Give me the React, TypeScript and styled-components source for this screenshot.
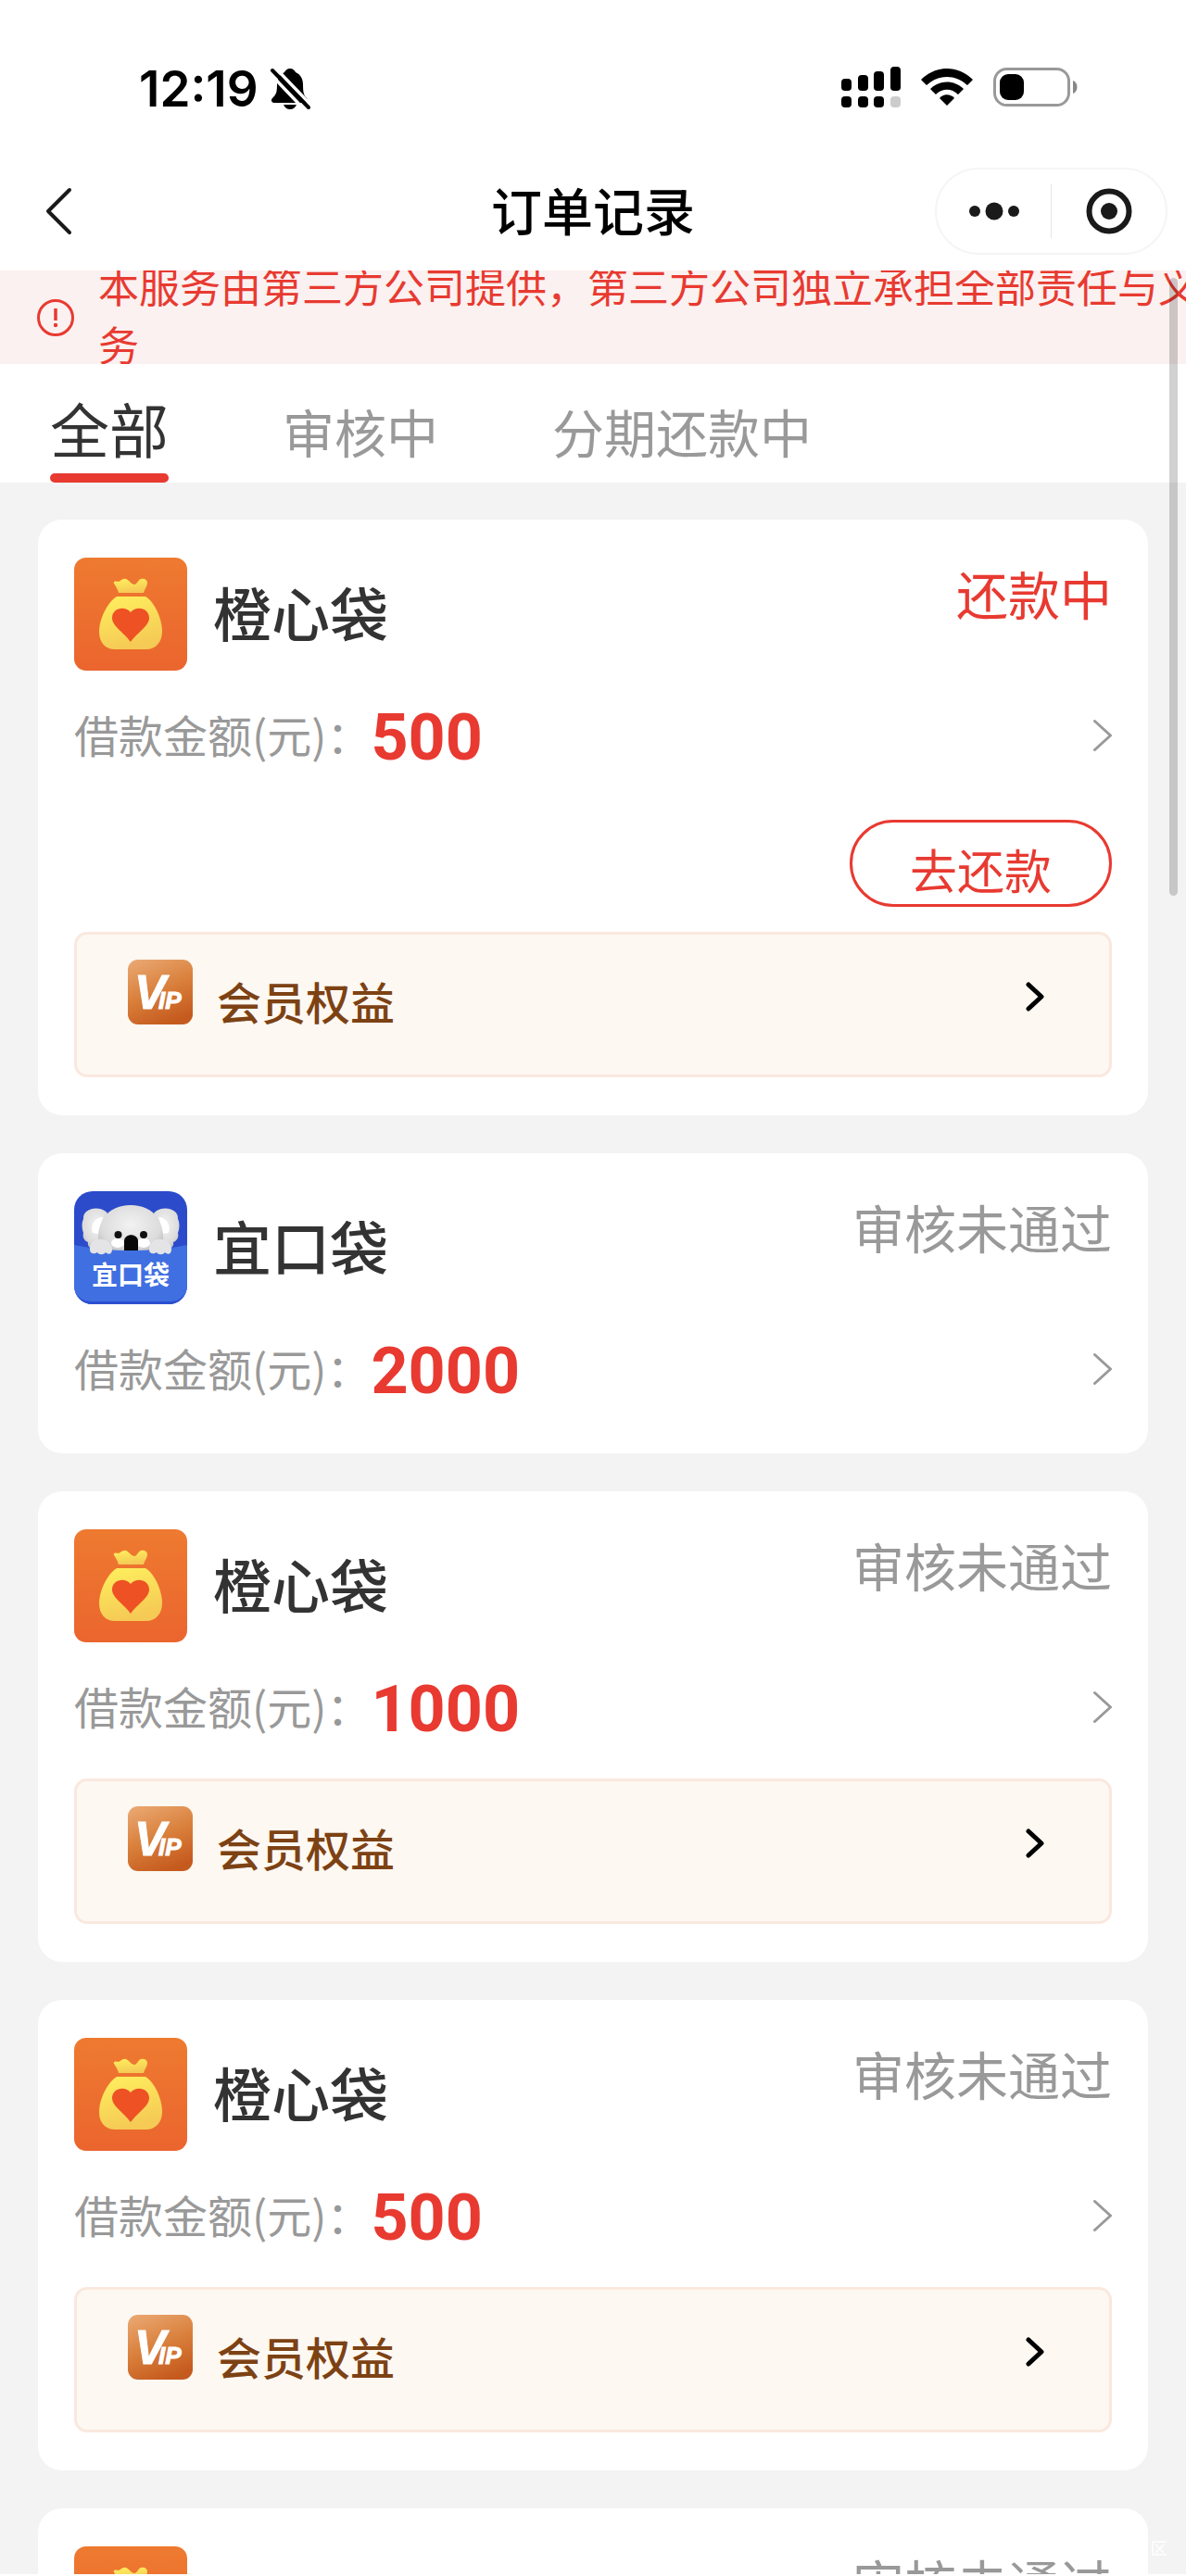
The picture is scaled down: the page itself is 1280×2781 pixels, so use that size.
import React, { useState } from "react";
import styled, { createGlobalStyle } from "styled-components";

const red = "#e83a31";
const grey = "#999999";

const GlobalStyle = createGlobalStyle`
  *, *::before, *::after { box-sizing: border-box; }
  body {
    margin: 0;
    background: #f3f3f3;
    font-family: "Liberation Sans", "Noto Sans CJK SC", sans-serif;
  }
  button { font: inherit; color: inherit; background: none; border: 0; padding: 0; margin: 0; cursor: pointer; }
  a { color: inherit; text-decoration: none; }
  h1, h2, p { margin: 0; font-weight: 500; }
  svg { display: block; flex: none; }
`;

const Screen = styled.div`
  position: relative;
  display: flex;
  flex-direction: column;
  height: 100vh;
  overflow: hidden;
  border-bottom: 2px solid #fff;
  font-family: "Noto Sans CJK SC", sans-serif;
`;

const StatusBar = styled.div`
  display: flex;
  align-items: center;
  justify-content: space-between;
  padding: 60px 117px 0 150px;
  height: 128px;
  background: #fff;
  flex: none;
`;

const Clock = styled.div`
  display: flex;
  align-items: center;
  gap: 12px;
  padding-top: 4px;
  font: 600 53px/64px Inter, sans-serif;
  color: #000;
`;

const StatusIcons = styled.div`
  display: flex;
  align-items: center;
  gap: 22px;
`;

const NavBar = styled.header`
  display: grid;
  grid-template-columns: 1fr auto 1fr;
  align-items: center;
  flex: none;
  height: 164px;
  padding: 36px 20px 0;
  background: #fff;
`;

const BackButton = styled.button`
  justify-self: start;
  padding: 0 24px;
`;

const Title = styled.h1`
  padding-bottom: 6px;
  font-size: 55px;
  line-height: 80px;
  color: #000;
`;

const Capsule = styled.div`
  display: flex;
  justify-self: end;
  align-items: center;
  width: 251px;
  height: 94px;
  border: 2px solid #f5f5f5;
  border-radius: 47px;
`;

const CapsuleButton = styled.button`
  display: flex;
  flex: 1;
  justify-content: center;
  align-items: center;
  height: 58px;
  & + & { border-left: 1px solid #e6e6e6; }
`;

const Notice = styled.div`
  display: flex;
  align-items: center;
  gap: 26px;
  flex: none;
  height: 101px;
  padding-left: 40px;
  overflow: hidden;
  background: #fbf1f0;
  color: ${red};
`;

const NoticeText = styled.p`
  flex: none;
  width: 1188px;
  padding-bottom: 6px;
  font-size: 44px;
  font-weight: 400;
  line-height: 63px;
`;

const Tabs = styled.nav`
  display: flex;
  align-items: baseline;
  gap: 123px;
  flex: none;
  height: 128px;
  padding: 24px 54px 0;
  background: #fff;
`;

const Tab = styled.button<{ $active: boolean }>`
  font-size: ${(p) => (p.$active ? 64 : 56)}px;
  line-height: 88px;
  color: ${(p) => (p.$active ? "#333333" : grey)};
  &::after {
    content: "";
    display: block;
    height: 10px;
    margin-top: 6px;
    border-radius: 5px;
    background: ${(p) => (p.$active ? red : "transparent")};
  }
`;

const List = styled.main`
  display: flex;
  flex-direction: column;
  gap: 41px;
  flex: 1;
  min-height: 0;
  padding: 40px 41px;
  overflow: hidden;
  background: #f3f3f3;
`;

const Card = styled.article`
  flex: none;
  padding: 41px 39px;
  border-radius: 26px;
  background: #fff;
`;

const CardHead = styled.div`
  display: flex;
  align-items: flex-start;
  gap: 28px;
`;

const Name = styled.h2`
  flex: 1;
  font-size: 63px;
  line-height: 116px;
  color: #333;
`;

const Status = styled.span<{ $due: boolean }>`
  font-size: 56px;
  line-height: 76px;
  color: ${(p) => (p.$due ? red : grey)};
`;

const AmountRow = styled.a`
  display: flex;
  align-items: center;
  height: 100px;
  margin-top: 20px;
`;

const AmountLabel = styled.span`
  padding-bottom: 4px;
  font-size: 48px;
  line-height: 72px;
  color: ${grey};
`;

const Amount = styled.strong`
  flex: 1;
  padding-top: 4px;
  font: 700 70px/96px Roboto, sans-serif;
  color: ${red};
`;

const Actions = styled.div`
  display: flex;
  justify-content: flex-end;
  margin-top: 41px;
`;

const RepayButton = styled.button`
  width: 283px;
  height: 94px;
  padding-top: 12px;
  border: 3px solid ${red};
  border-radius: 47px;
  font-size: 51px;
  line-height: 76px;
  color: ${red};
`;

const VipLink = styled.a`
  display: flex;
  align-items: flex-start;
  gap: 26px;
  height: 157px;
  margin-top: 27px;
  padding: 27px 70px 0 55px;
  border: 3px solid #fae8df;
  border-radius: 14px;
  background: #fdf8f1;
`;

const VipLabel = styled.span`
  flex: 1;
  font-size: 48px;
  font-weight: 500;
  line-height: 88px;
  color: #7d4214;
`;

const VipArrow = styled.span`
  display: flex;
  align-items: center;
  height: 80px;
`;

const ScrollThumb = styled.div`
  position: absolute;
  top: 300px;
  right: 9px;
  width: 9px;
  height: 667px;
  border-radius: 5px;
  background: rgba(0, 0, 0, 0.18);
`;

const CornerMark = styled.svg`
  position: absolute;
  right: 21px;
  bottom: 20px;
`;

const BellOff = () => (
  <svg width="44" height="46" viewBox="0 0 44 46" aria-hidden="true">
    <path d="M22 1c3 0 5 2 6 4 5 2 8 7 8 13 0 9 1 12 4 15 2 2 1 5-1 5H5c-3 0-4-3-2-5 4-4 5-6 5-15 0-6 3-11 8-13 1-2 3-4 6-4z" fill="#000" />
    <path d="M15 40h14c-1 3-4 5-7 5s-6-2-7-5z" fill="#000" />
    <path d="M-1 5L39 47M5-1L47 43" stroke="#fff" strokeWidth="3.500" />
    <path d="M3 3l39 40" stroke="#000" strokeWidth="4" strokeLinecap="round" />
  </svg>
);

const Signal = () => (
  <svg width="64" height="44" viewBox="0 0 64 44" aria-hidden="true">
    <rect x="0" y="13" width="11" height="13" rx="4" />
    <rect x="18" y="9" width="11" height="17" rx="4" />
    <rect x="35" y="5" width="11" height="21" rx="4" />
    <rect x="53" y="0" width="11" height="26" rx="4" />
    <rect x="0" y="32" width="11" height="12" rx="4" />
    <rect x="18" y="32" width="11" height="12" rx="4" />
    <rect x="35" y="32" width="11" height="12" rx="4" />
    <rect x="53" y="32" width="11" height="12" rx="4" fill="#ccc" />
  </svg>
);

const Wifi = () => (
  <svg width="56" height="40" viewBox="0 0 56 40" aria-hidden="true">
    <path d="M0 12C16-4 40-4 56 12l-6 6C37 6 19 6 6 18z" />
    <path d="M10 22c10-10 26-10 36 0l-6 6c-7-7-17-7-24 0z" />
    <path d="M20 32c4-5 12-5 16 0l-8 8z" />
  </svg>
);

const Battery = () => (
  <svg width="91" height="42" viewBox="0 0 91 42" aria-hidden="true">
    <rect x="1.500" y="1.500" width="80" height="39" rx="13" fill="none" stroke="#999" strokeWidth="3" />
    <rect x="7" y="7" width="26" height="28" rx="9" />
    <path d="M86 14c6 2 6 12 0 14z" fill="#888" />
  </svg>
);

const Chevron = ({ color, stroke }: { color: string; stroke: number }) => (
  <svg width="20" height="36" viewBox="0 0 20 36" fill="none" stroke={color} strokeWidth={stroke} strokeLinecap="round" strokeLinejoin="round" aria-hidden="true">
    <path d={stroke > 4 ? "M3 5l14 13L3 31" : "M1.500 2.500L18.500 18L1.500 33.500"} />
  </svg>
);

const AlertIcon = () => (
  <svg width="40" height="42" viewBox="0 0 40 42" fill="none" stroke={red} aria-hidden="true">
    <circle cx="20" cy="21" r="18.500" strokeWidth="3" />
    <path d="M20 11v13" strokeWidth="3.500" />
    <circle cx="20" cy="29" r="2.200" fill={red} stroke="none" />
  </svg>
);

const BagLogo = () => (
  <svg width="122" height="122" viewBox="0 0 122 122" aria-hidden="true">
    <defs>
      <linearGradient id="bagBg" x1="0" y1="0" x2="0" y2="1">
        <stop offset="0" stopColor="#ee7a30" />
        <stop offset="1" stopColor="#eb652e" />
      </linearGradient>
      <linearGradient id="bagFill" x1="0" y1="0" x2="0.300" y2="1">
        <stop offset="0" stopColor="#fff05e" />
        <stop offset="1" stopColor="#f5ca55" />
      </linearGradient>
    </defs>
    <rect width="122" height="122" rx="13" fill="url(#bagBg)" />
    <path d="M43 28c-1-2 1-3 4-2 3 0 5-4 9-3 4 2 6 6 9 6s4-5 7-6c4-1 7 1 7 4 0 4-3 7-4 11H48c-1-4-3-7-5-10z" fill="url(#bagFill)" />
    <path d="M46 42h31c10 6 18 24 18 38 0 12-8 19-17 19H44c-10 0-17-7-17-19 0-14 9-32 19-38z" fill="url(#bagFill)" />
    <path d="M61 91C53 80 41 74 41 65c0-10 13-14 20-6 7-8 20-4 20 6 0 9-12 15-20 26z" fill="#ee5124" />
  </svg>
);

const KoalaLogo = () => (
  <svg width="122" height="122" viewBox="0 0 122 122" aria-hidden="true">
    <defs>
      <clipPath id="koalaClip"><rect width="122" height="122" rx="20" /></clipPath>
      <radialGradient id="fur" cx="0.500" cy="0.400" r="0.650">
        <stop offset="0" stopColor="#f2f2f2" />
        <stop offset="0.700" stopColor="#dcdcdc" />
        <stop offset="1" stopColor="#b9b9be" />
      </radialGradient>
    </defs>
    <g clipPath="url(#koalaClip)">
      <rect width="122" height="122" fill="#2b4bcb" />
      <path d="M10 30c-1-9 10-13 18-11 8 2 12 8 12 20S33 63 24 63c-7 0-10-4-9-8-5-2-6-6-5-10-2-5-2-11 0-15z" fill="url(#fur)" />
      <path d="M112 30c1-9-10-13-18-11-8 2-12 8-12 20s7 24 16 24c7 0 10-4 9-8 5-2 6-6 5-10 2-5 2-11 0-15z" fill="url(#fur)" />
      <path d="M20 45c-3-9 3-17 11-17-2 6-4 12-5 18z" fill="#fff" />
      <path d="M102 45c3-9-3-17-11-17 2 6 4 12 5 18z" fill="#fff" />
      <path d="M26 60C24 32 35 16 61 15c26 1 37 17 35 45l-8 8H34z" fill="url(#fur)" />
      <ellipse cx="47" cy="56" rx="7" ry="5" fill="#fff" />
      <ellipse cx="75" cy="56" rx="7" ry="5" fill="#fff" />
      <path d="M0 58c40 8 82 8 122 0v64H0z" fill="#406fe1" />
      <path d="M0 108c6 9 12 11 20 11h82c8 0 14-2 20-11v14H0z" fill="#2b50cf" />
      <path d="M54 64V54c0-9 15-9 15 0v10z" fill="#080808" />
      <circle cx="47.500" cy="47" r="4" fill="#111" />
      <circle cx="75" cy="47" r="4" fill="#111" />
      <path d="M17 63c0-7 5-12 12-11 7-1 12 5 12 11 0 5-4 6-7 3-2 3-7 3-9 0-3 2-8 2-8-3z" fill="#e4e4e6" />
      <path d="M81 63c0-7 5-12 12-11 7-1 12 5 12 11 0 5-4 6-7 3-2 3-7 3-9 0-3 2-8 2-8-3z" fill="#e4e4e6" />
      <text x="61" y="101" textAnchor="middle" fontSize="28" fontWeight="700" fill="#fff">宜口袋</text>
    </g>
  </svg>
);

const VipIcon = () => (
  <svg width="70" height="70" viewBox="0 0 70 70" aria-hidden="true">
    <defs>
      <linearGradient id="vipBg" x1="0.200" y1="0" x2="0.600" y2="1">
        <stop offset="0" stopColor="#e9a56e" />
        <stop offset="0.500" stopColor="#d9803c" />
        <stop offset="1" stopColor="#c55a1e" />
      </linearGradient>
    </defs>
    <rect width="70" height="70" rx="11" fill="url(#vipBg)" />
    <text x="7" y="53" fontSize="51" fill="#fff" stroke="#fff" strokeWidth="1" fontFamily="Liberation Sans, sans-serif" fontWeight="700" fontStyle="italic">
      V<tspan dx="-8" fontSize="26">IP</tspan>
    </text>
  </svg>
);

type Order = { brand: "bag" | "koala"; status: string; amount: number; due?: boolean; vip?: boolean };

const orders: Order[] = [
  { brand: "bag", status: "还款中", amount: 500, due: true, vip: true },
  { brand: "koala", status: "审核未通过", amount: 2000 },
  { brand: "bag", status: "审核未通过", amount: 1000, vip: true },
  { brand: "bag", status: "审核未通过", amount: 500, vip: true },
  { brand: "bag", status: "审核未通过", amount: 500, vip: true },
];

const OrderCard = ({ order }: { order: Order }) => (
  <Card>
    <CardHead>
      {order.brand === "bag" ? <BagLogo /> : <KoalaLogo />}
      <Name>{order.brand === "bag" ? "橙心袋" : "宜口袋"}</Name>
      <Status $due={!!order.due}>{order.status}</Status>
    </CardHead>
    <AmountRow href="#order">
      <AmountLabel>借款金额(元)：</AmountLabel>
      <Amount>{order.amount}</Amount>
      <Chevron color={grey} stroke={3} />
    </AmountRow>
    {order.due && (
      <Actions>
        <RepayButton type="button">去还款</RepayButton>
      </Actions>
    )}
    {order.vip && (
      <VipLink href="#vip">
        <VipIcon />
        <VipLabel>会员权益</VipLabel>
        <VipArrow>
          <Chevron color="#000" stroke={5} />
        </VipArrow>
      </VipLink>
    )}
  </Card>
);

const tabs = ["全部", "审核中", "分期还款中"];

export default function App() {
  const [active, setActive] = useState(0);
  return (
    <Screen>
      <GlobalStyle />
      <StatusBar>
        <Clock>
          12:19
          <BellOff />
        </Clock>
        <StatusIcons>
          <Signal />
          <Wifi />
          <Battery />
        </StatusIcons>
      </StatusBar>
      <NavBar>
        <BackButton type="button" aria-label="返回">
          <svg width="40" height="54" viewBox="0 0 40 54" fill="none" stroke="#1a1a1a" strokeWidth="4" strokeLinecap="round" strokeLinejoin="round">
            <path d="M31 4L8 27l23 23" />
          </svg>
        </BackButton>
        <Title>订单记录</Title>
        <Capsule>
          <CapsuleButton type="button" aria-label="更多">
            <svg width="56" height="24" viewBox="0 0 56 24" fill="#1a1a1a">
              <circle cx="7" cy="12" r="6" />
              <circle cx="28" cy="12" r="9.500" />
              <circle cx="49" cy="12" r="6" />
            </svg>
          </CapsuleButton>
          <CapsuleButton type="button" aria-label="关闭">
            <svg width="50" height="50" viewBox="0 0 50 50" fill="#1a1a1a">
              <circle cx="25" cy="25" r="21.500" fill="none" stroke="#1a1a1a" strokeWidth="6" />
              <circle cx="25" cy="25" r="9" />
            </svg>
          </CapsuleButton>
        </Capsule>
      </NavBar>
      <Notice role="note">
        <AlertIcon />
        <NoticeText>本服务由第三方公司提供，第三方公司独立承担全部责任与义务</NoticeText>
      </Notice>
      <Tabs>
        {tabs.map((label, i) => (
          <Tab key={label} type="button" $active={i === active} onClick={() => setActive(i)}>
            {label}
          </Tab>
        ))}
      </Tabs>
      <List>
        {orders.map((order, i) => (
          <OrderCard key={i} order={order} />
        ))}
      </List>
      <ScrollThumb />
      <CornerMark width="16" height="16" viewBox="0 0 16 16" fill="none" stroke="#fff" strokeWidth="1.500" aria-hidden="true">
        <path d="M16 1H1v14h15M4 4l9 9M13 4l-9 9" />
      </CornerMark>
    </Screen>
  );
}
